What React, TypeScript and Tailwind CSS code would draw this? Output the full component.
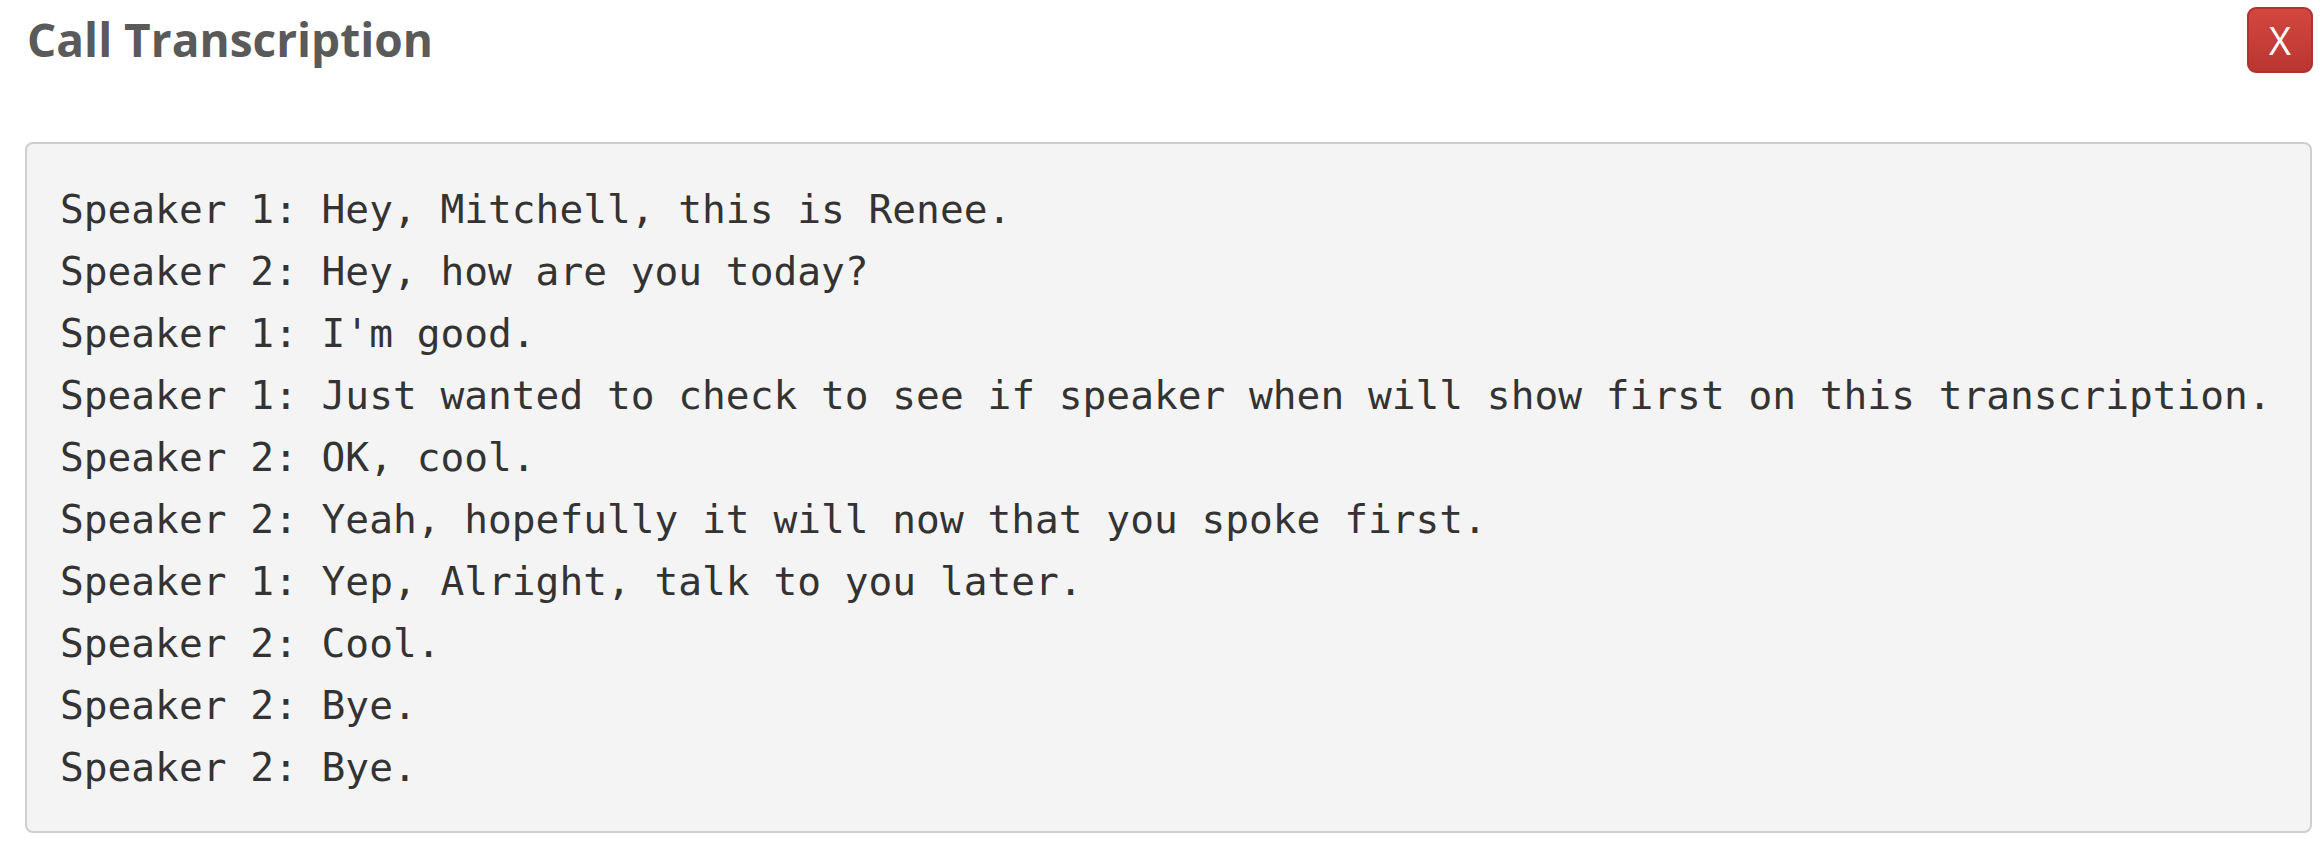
import React from "react";

const lines = [
  "Speaker 1: Hey, Mitchell, this is Renee.",
  "Speaker 2: Hey, how are you today?",
  "Speaker 1: I'm good.",
  "Speaker 1: Just wanted to check to see if speaker when will show first on this transcription.",
  "Speaker 2: OK, cool.",
  "Speaker 2: Yeah, hopefully it will now that you spoke first.",
  "Speaker 1: Yep, Alright, talk to you later.",
  "Speaker 2: Cool.",
  "Speaker 2: Bye.",
  "Speaker 2: Bye.",
];

export default function App() {
  return (
    <div className="w-[2320px] h-[868px] bg-white overflow-hidden">
      <div className="flex justify-between items-start pl-[27px] pr-[7px] pt-[7px]">
        <h1
          className="mt-0 text-[46px] leading-[64px] font-bold text-[#5a5a5a]"
          style={{ fontFamily: '"Open Sans", "Noto Sans", sans-serif' }}
        >
          Call Transcription
        </h1>
        <button
          className="w-[66px] h-[66px] rounded-[9px] border-2 border-[#b0302c] bg-gradient-to-b from-[#d2473f] to-[#bb3631] text-white text-[38px] leading-none flex items-center justify-center"
          style={{ fontFamily: '"Open Sans", "Noto Sans", sans-serif' }}
        >
          X
        </button>
      </div>
      <div className="ml-[25px] mr-[8px] mt-[69px] h-[691px] rounded-[8px] border-2 border-[#cfcfcf] bg-[#f4f4f4] pl-[33px] pt-[34px]">
        <pre
          className="text-[39.5px] leading-[62px] text-[#333333]"
          style={{ fontFamily: '"DejaVu Sans Mono", "Liberation Mono", monospace' }}
        >
          {lines.join("\n")}
        </pre>
      </div>
    </div>
  );
}
